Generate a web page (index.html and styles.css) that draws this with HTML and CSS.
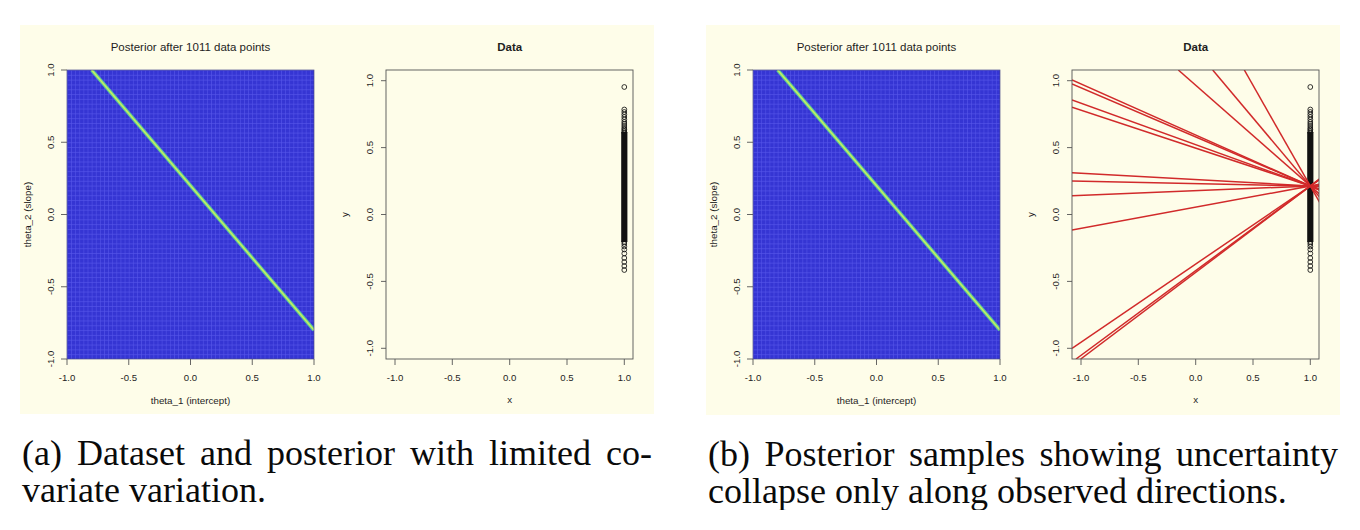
FILE: index.html
```html
<!DOCTYPE html>
<html lang="en">
<head>
<meta charset="utf-8">
<title>Posterior figures</title>
<link rel="stylesheet" href="styles.css">
</head>
<body>
<div class="figure-row">
  <figure class="subfig">
    <div class="panel">
      <svg class="plot" width="634" height="389" viewBox="0 0 634 389">
        <defs>
          <pattern id="gridA" patternUnits="userSpaceOnUse" x="47" y="45" width="4.1167" height="4.8167">
            <rect width="4.1167" height="4.8167" fill="#3535d3"/>
            <path d="M0 0.3H4.1167M0.3 0V4.8167" stroke="#5555e8" stroke-width="0.7"/>
          </pattern>
          <clipPath id="heatClipA"><rect x="47" y="45" width="247" height="289"/></clipPath>
        </defs>
        <!-- heatmap -->
        <text class="plot-title" x="170.5" y="26">Posterior after 1011 data points</text>
        <rect x="47" y="45" width="247" height="289" fill="url(#gridA)"/>
        <g clip-path="url(#heatClipA)">
          <line x1="71.7" y1="45" x2="294" y2="305.1" class="ridge-outer"/>
          <line x1="71.7" y1="45" x2="294" y2="305.1" class="ridge-inner"/>
        </g>
        <rect x="47" y="45" width="247" height="289" class="frame-light"/>
        <path class="tick" d="M41 45H47M41 117.25H47M41 189.5H47M41 261.75H47M41 334H47"/>
        <path class="tick" d="M47 334V340M108.75 334V340M170.5 334V340M232.25 334V340M294 334V340"/>
        <text class="tick-label" transform="translate(33.8 45) rotate(-90)">1.0</text>
        <text class="tick-label" transform="translate(33.8 117.25) rotate(-90)">0.5</text>
        <text class="tick-label" transform="translate(33.8 189.5) rotate(-90)">0.0</text>
        <text class="tick-label" transform="translate(33.8 261.75) rotate(-90)">-0.5</text>
        <text class="tick-label" transform="translate(33.8 334) rotate(-90)">-1.0</text>
        <text class="tick-label" x="47" y="356.3">-1.0</text>
        <text class="tick-label" x="108.75" y="356.3">-0.5</text>
        <text class="tick-label" x="170.5" y="356.3">0.0</text>
        <text class="tick-label" x="232.25" y="356.3">0.5</text>
        <text class="tick-label" x="294" y="356.3">1.0</text>
        <text class="axis-label" x="170.5" y="378.5">theta_1 (intercept)</text>
        <text class="axis-label" transform="translate(10.5 189.5) rotate(-90)">theta_2 (slope)</text>

        <!-- data plot -->
        <text class="plot-title bold" x="489.7" y="26">Data</text>
        <rect x="366" y="45" width="247" height="289" class="frame"/>
        <path class="tick" d="M361 55.7H366M361 122.6H366M361 189.5H366M361 256.4H366M361 323.3H366"/>
        <path class="tick" d="M375 334V340M432.3 334V340M489.7 334V340M547 334V340M604.3 334V340"/>
        <text class="tick-label" transform="translate(353 55.7) rotate(-90)">1.0</text>
        <text class="tick-label" transform="translate(353 122.6) rotate(-90)">0.5</text>
        <text class="tick-label" transform="translate(353 189.5) rotate(-90)">0.0</text>
        <text class="tick-label" transform="translate(353 256.4) rotate(-90)">-0.5</text>
        <text class="tick-label" transform="translate(353 323.3) rotate(-90)">-1.0</text>
        <text class="tick-label" x="375" y="356.3">-1.0</text>
        <text class="tick-label" x="432.3" y="356.3">-0.5</text>
        <text class="tick-label" x="489.7" y="356.3">0.0</text>
        <text class="tick-label" x="547" y="356.3">0.5</text>
        <text class="tick-label" x="604.3" y="356.3">1.0</text>
        <text class="axis-label" x="489.7" y="377.5">x</text>
        <text class="axis-label" transform="translate(327.5 189.5) rotate(-90)">y</text>
        <g class="pts">
          <circle cx="604.3" cy="62" r="2.4"/>
          <circle cx="604.3" cy="84.5" r="2.4"/>
          <circle cx="604.3" cy="87" r="2.4"/>
          <circle cx="604.3" cy="89.5" r="2.4"/>
          <circle cx="604.3" cy="92" r="2.4"/>
          <circle cx="604.3" cy="94.5" r="2.4"/>
          <circle cx="604.3" cy="97" r="2.4"/>
          <circle cx="604.3" cy="99" r="2.4"/>
          <circle cx="604.3" cy="101" r="2.4"/>
          <circle cx="604.3" cy="103" r="2.4"/>
          <circle cx="604.3" cy="104.5" r="2.4"/>
          <circle cx="604.3" cy="106" r="2.4"/>
          <circle cx="604.3" cy="107.5" r="2.4"/>
          <circle cx="604.3" cy="217" r="2.4"/>
          <circle cx="604.3" cy="219" r="2.4"/>
          <circle cx="604.3" cy="221.5" r="2.4"/>
          <circle cx="604.3" cy="224.5" r="2.4"/>
          <circle cx="604.3" cy="228.5" r="2.4"/>
          <circle cx="604.3" cy="233" r="2.4"/>
          <circle cx="604.3" cy="237" r="2.4"/>
          <circle cx="604.3" cy="241" r="2.4"/>
          <circle cx="604.3" cy="245" r="2.4"/>
        </g>
        <rect x="601.2" y="107" width="6.2" height="110" class="pts-band"/>
      </svg>
    </div>
    <figcaption class="caption">(a) Dataset and posterior with limited co-variate variation.</figcaption>
  </figure>

  <figure class="subfig">
    <div class="panel panel-b">
      <svg class="plot" width="634" height="390" viewBox="0 0 634 390">
        <defs>
          <pattern id="gridB" patternUnits="userSpaceOnUse" x="47" y="45" width="4.1167" height="4.8167">
            <rect width="4.1167" height="4.8167" fill="#3535d3"/>
            <path d="M0 0.3H4.1167M0.3 0V4.8167" stroke="#5555e8" stroke-width="0.7"/>
          </pattern>
          <clipPath id="heatClipB"><rect x="47" y="45" width="247" height="289"/></clipPath>
          <clipPath id="dataClipB"><rect x="366" y="45" width="247" height="289"/></clipPath>
        </defs>
        <!-- heatmap -->
        <text class="plot-title" x="170.5" y="26">Posterior after 1011 data points</text>
        <rect x="47" y="45" width="247" height="289" fill="url(#gridB)"/>
        <g clip-path="url(#heatClipB)">
          <line x1="71.7" y1="45" x2="294" y2="305.1" class="ridge-outer"/>
          <line x1="71.7" y1="45" x2="294" y2="305.1" class="ridge-inner"/>
        </g>
        <rect x="47" y="45" width="247" height="289" class="frame-light"/>
        <path class="tick" d="M41 45H47M41 117.25H47M41 189.5H47M41 261.75H47M41 334H47"/>
        <path class="tick" d="M47 334V340M108.75 334V340M170.5 334V340M232.25 334V340M294 334V340"/>
        <text class="tick-label" transform="translate(33.8 45) rotate(-90)">1.0</text>
        <text class="tick-label" transform="translate(33.8 117.25) rotate(-90)">0.5</text>
        <text class="tick-label" transform="translate(33.8 189.5) rotate(-90)">0.0</text>
        <text class="tick-label" transform="translate(33.8 261.75) rotate(-90)">-0.5</text>
        <text class="tick-label" transform="translate(33.8 334) rotate(-90)">-1.0</text>
        <text class="tick-label" x="47" y="356.3">-1.0</text>
        <text class="tick-label" x="108.75" y="356.3">-0.5</text>
        <text class="tick-label" x="170.5" y="356.3">0.0</text>
        <text class="tick-label" x="232.25" y="356.3">0.5</text>
        <text class="tick-label" x="294" y="356.3">1.0</text>
        <text class="axis-label" x="170.5" y="378.5">theta_1 (intercept)</text>
        <text class="axis-label" transform="translate(10.5 189.5) rotate(-90)">theta_2 (slope)</text>

        <!-- data plot with posterior sample lines -->
        <text class="plot-title bold" x="489.7" y="26">Data</text>
        <g class="pts">
          <circle cx="604.3" cy="62" r="2.4"/>
          <circle cx="604.3" cy="84.5" r="2.4"/>
          <circle cx="604.3" cy="87" r="2.4"/>
          <circle cx="604.3" cy="89.5" r="2.4"/>
          <circle cx="604.3" cy="92" r="2.4"/>
          <circle cx="604.3" cy="94.5" r="2.4"/>
          <circle cx="604.3" cy="97" r="2.4"/>
          <circle cx="604.3" cy="99" r="2.4"/>
          <circle cx="604.3" cy="101" r="2.4"/>
          <circle cx="604.3" cy="103" r="2.4"/>
          <circle cx="604.3" cy="104.5" r="2.4"/>
          <circle cx="604.3" cy="106" r="2.4"/>
          <circle cx="604.3" cy="107.5" r="2.4"/>
          <circle cx="604.3" cy="217" r="2.4"/>
          <circle cx="604.3" cy="219" r="2.4"/>
          <circle cx="604.3" cy="221.5" r="2.4"/>
          <circle cx="604.3" cy="224.5" r="2.4"/>
          <circle cx="604.3" cy="228.5" r="2.4"/>
          <circle cx="604.3" cy="233" r="2.4"/>
          <circle cx="604.3" cy="237" r="2.4"/>
          <circle cx="604.3" cy="241" r="2.4"/>
          <circle cx="604.3" cy="245" r="2.4"/>
        </g>
        <rect x="601.2" y="107" width="6.2" height="110" class="pts-band"/>
        <g class="samples" clip-path="url(#dataClipB)">
          <line x1="366" y1="55" x2="614" y2="165.3"/>
          <line x1="366" y1="59" x2="614" y2="165.2"/>
          <line x1="366" y1="75" x2="614" y2="164.5"/>
          <line x1="366" y1="82.3" x2="614" y2="164.2"/>
          <line x1="366" y1="147.7" x2="614" y2="161.5"/>
          <line x1="366" y1="156" x2="614" y2="161.2"/>
          <line x1="366" y1="170.7" x2="614" y2="160.6"/>
          <line x1="366" y1="205" x2="614" y2="159.2"/>
          <line x1="366" y1="323.3" x2="614" y2="154.4"/>
          <line x1="370" y1="334" x2="614" y2="153.8"/>
          <line x1="374.7" y1="334" x2="614" y2="153.7"/>
          <line x1="472.3" y1="45" x2="614" y2="169.5"/>
          <line x1="506.7" y1="45" x2="614" y2="172.5"/>
          <line x1="538.3" y1="45" x2="614" y2="178.1"/>
        </g>
        <rect x="366" y="45" width="247" height="289" class="frame"/>
        <path class="tick" d="M361 55.7H366M361 122.6H366M361 189.5H366M361 256.4H366M361 323.3H366"/>
        <path class="tick" d="M375 334V340M432.3 334V340M489.7 334V340M547 334V340M604.3 334V340"/>
        <text class="tick-label" transform="translate(353 55.7) rotate(-90)">1.0</text>
        <text class="tick-label" transform="translate(353 122.6) rotate(-90)">0.5</text>
        <text class="tick-label" transform="translate(353 189.5) rotate(-90)">0.0</text>
        <text class="tick-label" transform="translate(353 256.4) rotate(-90)">-0.5</text>
        <text class="tick-label" transform="translate(353 323.3) rotate(-90)">-1.0</text>
        <text class="tick-label" x="375" y="356.3">-1.0</text>
        <text class="tick-label" x="432.3" y="356.3">-0.5</text>
        <text class="tick-label" x="489.7" y="356.3">0.0</text>
        <text class="tick-label" x="547" y="356.3">0.5</text>
        <text class="tick-label" x="604.3" y="356.3">1.0</text>
        <text class="axis-label" x="489.7" y="377.5">x</text>
        <text class="axis-label" transform="translate(327.5 189.5) rotate(-90)">y</text>
      </svg>
    </div>
    <figcaption class="caption">(b) Posterior samples showing uncertainty collapse only along observed directions.</figcaption>
  </figure>
</div>
</body>
</html>
```

FILE: styles.css
```css
html, body {
  margin: 0;
  padding: 0;
  background: #ffffff;
}

.figure-row {
  display: flex;
  gap: 52px;
  padding: 25px 20px 0 20px;
}

.subfig {
  margin: 0;
  width: 634px;
  flex: none;
}

.panel {
  width: 634px;
  height: 389px;
  background: #fefde9;
}

.panel-b {
  height: 390px;
}

.plot {
  display: block;
}

.plot text {
  font-family: "Liberation Sans", Arial, sans-serif;
  fill: #1e1e1e;
  text-anchor: middle;
}

.plot .plot-title {
  font-size: 11.5px;
}

.plot .bold {
  font-weight: bold;
}

.plot .tick-label {
  font-size: 9.6px;
}

.plot .axis-label {
  font-size: 9.8px;
}

.tick {
  stroke: #555555;
  stroke-width: 0.9;
  fill: none;
}

.frame {
  fill: none;
  stroke: #555555;
  stroke-width: 0.9;
}

.frame-light {
  fill: none;
  stroke: #4a4a8a;
  stroke-width: 0.7;
}

.ridge-outer {
  stroke: #5bcf96;
  stroke-width: 3.6;
}

.ridge-inner {
  stroke: #cdec5c;
  stroke-width: 1.4;
}

.pts circle {
  fill: none;
  stroke: #111111;
  stroke-width: 0.85;
}

.pts-band {
  fill: #111111;
}

.samples line {
  stroke: #d12a2a;
  stroke-width: 1.5;
}

.caption {
  margin: 21px 0 0 0;
  padding: 0 2px;
  font-family: "Liberation Serif", "Times New Roman", serif;
  font-size: 36px;
  line-height: 37px;
  text-align: justify;
  color: #0a0a0a;
}
```
